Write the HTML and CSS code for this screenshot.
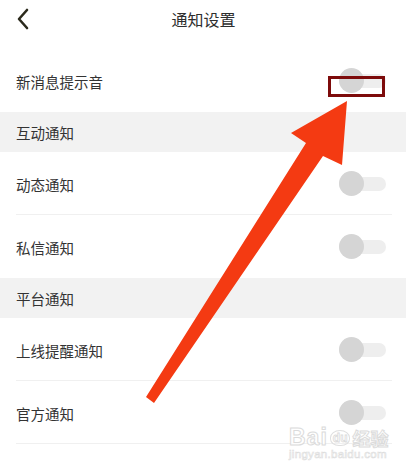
FILE: index.html
```html
<!DOCTYPE html>
<html lang="zh">
<head>
<meta charset="utf-8">
<link rel="stylesheet" href="styles.css">
</head>
<body>
<div class="page">
  <header class="header">
    <svg class="back" width="14" height="22" viewBox="0 0 14 22"><path d="M11 2 L3 11 L11 20" fill="none" stroke="#2b2a1c" stroke-width="2.6" stroke-linecap="round" stroke-linejoin="round"/></svg>
    <div class="title">通知设置</div>
  </header>
  <div class="row"><span class="label">新消息提示音</span><span class="toggle"><span class="knob"></span></span></div>
  <div class="section">互动通知</div>
  <div class="row line"><span class="label">动态通知</span><span class="toggle"><span class="knob"></span></span></div>
  <div class="row"><span class="label">私信通知</span><span class="toggle"><span class="knob"></span></span></div>
  <div class="section">平台通知</div>
  <div class="row line"><span class="label">上线提醒通知</span><span class="toggle"><span class="knob"></span></span></div>
  <div class="row line"><span class="label">官方通知</span><span class="toggle"><span class="knob"></span></span></div>

  <div class="highlight"></div>
  <svg class="arrow" width="406" height="468" viewBox="0 0 406 468">
    <polygon points="347,101 342,165 323,156 154,403 146,397 306,143 291,133" fill="#f43a12"/>
  </svg>
  <div class="watermark">
    <div class="wm-top"><span class="wm-bai">Bai</span><span class="wm-du">du</span><span class="wm-jy">经验</span></div>
    <div class="wm-url">jingyan.baidu.com</div>
  </div>
</div>
</body>
</html>
```

FILE: styles.css
```css
* { box-sizing: border-box; }
html, body { margin: 0; padding: 0; background: #fff; }
body { font-family: "Noto Sans CJK SC", "Noto Sans", sans-serif; color: #333; }
.page { position: relative; width: 406px; height: 468px; overflow: hidden; }
.header { height: 49px; display: flex; align-items: flex-start; padding-top: 8px; position: relative; }
.back { position: absolute; left: 16px; top: 8px; }
.title { flex: 1; text-align: center; font-size: 16px; line-height: 23px; color: #2e2e2e; padding-left: 1px; }
.row { height: 63px; display: flex; align-items: center; justify-content: space-between; padding: 2px 20px 0 16px; position: relative; }
.row.line::after { content: ""; position: absolute; left: 16px; right: 14px; bottom: 0; height: 1px; background: #f0f0f0; }
.label { font-size: 14.5px; color: #333; }
.section { height: 40px; background: #f2f2f2; display: flex; align-items: center; padding-left: 16px; font-size: 14.5px; color: #333; }
.toggle { width: 47px; height: 14px; border-radius: 7px; background: #eeeeee; position: relative; margin-top: -2px; }
.knob { position: absolute; left: 0; top: -6px; width: 25px; height: 25px; border-radius: 50%; background: #d5d5d5; }
.highlight { position: absolute; left: 328px; top: 76px; width: 57px; height: 21px; border: 3px solid #7d0b0b; }
.arrow { position: absolute; left: 0; top: 0; pointer-events: none; }
.watermark { position: absolute; left: 289px; top: 424px; color: #fff; opacity: 0.9; }
.wm-top { display: flex; align-items: center; gap: 2px; font-family: "Liberation Sans", sans-serif; }
.wm-bai { font-size: 23px; font-weight: bold; color: #fff; -webkit-text-stroke: 1px #d8d8d8; letter-spacing: 1px; }
.wm-du { font-size: 12px; font-weight: bold; color: #fff; -webkit-text-stroke: 0.8px #d8d8d8; border: 1px solid #dcdcdc; border-radius: 50% 50% 45% 45%; padding: 0 2px; }
.wm-jy { font-family: "Noto Sans CJK SC", sans-serif; font-size: 18px; font-weight: bold; color: #fff; -webkit-text-stroke: 1px #d8d8d8; }
.wm-url { font-family: "Liberation Sans", sans-serif; font-size: 11.5px; color: #fff; -webkit-text-stroke: 0.6px #dadada; letter-spacing: 0.3px; margin-top: -3px; }
```
